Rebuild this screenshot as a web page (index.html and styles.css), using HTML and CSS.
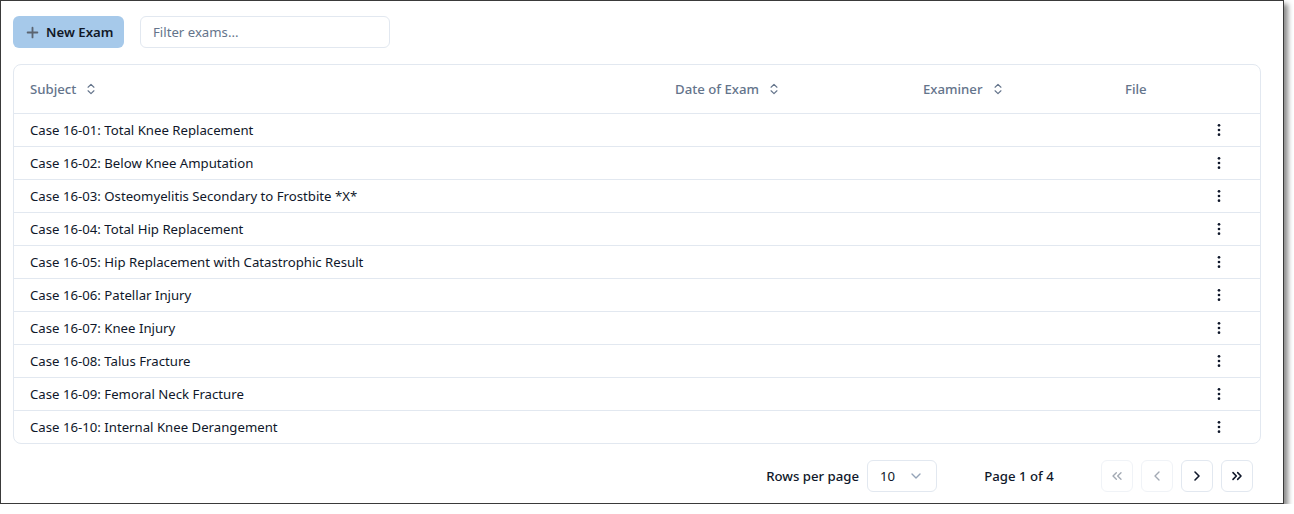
FILE: index.html
```html
<!DOCTYPE html>
<html>
<head>
<meta charset="utf-8">
<link rel="stylesheet" href="styles.css">
</head>
<body>
<div class="frame">
  <div class="toolbar">
    <button class="btn-new">
      <svg width="13" height="13" viewBox="0 0 24 24" fill="none" stroke="#5b6470" stroke-width="3.4" stroke-linecap="round"><path d="M12 3v18M3 12h18"/></svg>
      <span>New Exam</span>
    </button>
    <div class="filter">Filter exams...</div>
  </div>

  <div class="card">
    <div class="row head">
      <div class="cell">Subject <svg class="sort" width="14" height="14" viewBox="0 0 24 24" fill="none" stroke="currentColor" stroke-width="2" stroke-linecap="round" stroke-linejoin="round"><path d="m7 15 5 5 5-5"/><path d="m7 9 5-5 5 5"/></svg></div>
      <div class="cell">Date of Exam <svg class="sort" width="14" height="14" viewBox="0 0 24 24" fill="none" stroke="currentColor" stroke-width="2" stroke-linecap="round" stroke-linejoin="round"><path d="m7 15 5 5 5-5"/><path d="m7 9 5-5 5 5"/></svg></div>
      <div class="cell">Examiner <svg class="sort" width="14" height="14" viewBox="0 0 24 24" fill="none" stroke="currentColor" stroke-width="2" stroke-linecap="round" stroke-linejoin="round"><path d="m7 15 5 5 5-5"/><path d="m7 9 5-5 5 5"/></svg></div>
      <div class="cell">File</div>
      <div class="cell"></div>
    </div>
    <div class="row"><div class="cell">Case 16-01: Total Knee Replacement</div><div class="cell"></div><div class="cell"></div><div class="cell"></div><div class="cell act"><svg width="16" height="16" viewBox="0 0 24 24" fill="#0f172a"><circle cx="12" cy="5" r="2"/><circle cx="12" cy="12" r="2"/><circle cx="12" cy="19" r="2"/></svg></div></div>
    <div class="row"><div class="cell">Case 16-02: Below Knee Amputation</div><div class="cell"></div><div class="cell"></div><div class="cell"></div><div class="cell act"><svg width="16" height="16" viewBox="0 0 24 24" fill="#0f172a"><circle cx="12" cy="5" r="2"/><circle cx="12" cy="12" r="2"/><circle cx="12" cy="19" r="2"/></svg></div></div>
    <div class="row"><div class="cell">Case 16-03: Osteomyelitis Secondary to Frostbite *X*</div><div class="cell"></div><div class="cell"></div><div class="cell"></div><div class="cell act"><svg width="16" height="16" viewBox="0 0 24 24" fill="#0f172a"><circle cx="12" cy="5" r="2"/><circle cx="12" cy="12" r="2"/><circle cx="12" cy="19" r="2"/></svg></div></div>
    <div class="row"><div class="cell">Case 16-04: Total Hip Replacement</div><div class="cell"></div><div class="cell"></div><div class="cell"></div><div class="cell act"><svg width="16" height="16" viewBox="0 0 24 24" fill="#0f172a"><circle cx="12" cy="5" r="2"/><circle cx="12" cy="12" r="2"/><circle cx="12" cy="19" r="2"/></svg></div></div>
    <div class="row"><div class="cell">Case 16-05: Hip Replacement with Catastrophic Result</div><div class="cell"></div><div class="cell"></div><div class="cell"></div><div class="cell act"><svg width="16" height="16" viewBox="0 0 24 24" fill="#0f172a"><circle cx="12" cy="5" r="2"/><circle cx="12" cy="12" r="2"/><circle cx="12" cy="19" r="2"/></svg></div></div>
    <div class="row"><div class="cell">Case 16-06: Patellar Injury</div><div class="cell"></div><div class="cell"></div><div class="cell"></div><div class="cell act"><svg width="16" height="16" viewBox="0 0 24 24" fill="#0f172a"><circle cx="12" cy="5" r="2"/><circle cx="12" cy="12" r="2"/><circle cx="12" cy="19" r="2"/></svg></div></div>
    <div class="row"><div class="cell">Case 16-07: Knee Injury</div><div class="cell"></div><div class="cell"></div><div class="cell"></div><div class="cell act"><svg width="16" height="16" viewBox="0 0 24 24" fill="#0f172a"><circle cx="12" cy="5" r="2"/><circle cx="12" cy="12" r="2"/><circle cx="12" cy="19" r="2"/></svg></div></div>
    <div class="row"><div class="cell">Case 16-08: Talus Fracture</div><div class="cell"></div><div class="cell"></div><div class="cell"></div><div class="cell act"><svg width="16" height="16" viewBox="0 0 24 24" fill="#0f172a"><circle cx="12" cy="5" r="2"/><circle cx="12" cy="12" r="2"/><circle cx="12" cy="19" r="2"/></svg></div></div>
    <div class="row"><div class="cell">Case 16-09: Femoral Neck Fracture</div><div class="cell"></div><div class="cell"></div><div class="cell"></div><div class="cell act"><svg width="16" height="16" viewBox="0 0 24 24" fill="#0f172a"><circle cx="12" cy="5" r="2"/><circle cx="12" cy="12" r="2"/><circle cx="12" cy="19" r="2"/></svg></div></div>
    <div class="row"><div class="cell">Case 16-10: Internal Knee Derangement</div><div class="cell"></div><div class="cell"></div><div class="cell"></div><div class="cell act"><svg width="16" height="16" viewBox="0 0 24 24" fill="#0f172a"><circle cx="12" cy="5" r="2"/><circle cx="12" cy="12" r="2"/><circle cx="12" cy="19" r="2"/></svg></div></div>
  </div>

  <div class="pager">
    <span class="label">Rows per page</span>
    <div class="select"><span>10</span><svg width="16" height="16" viewBox="0 0 24 24" fill="none" stroke="#94a3b8" stroke-width="2" stroke-linecap="round" stroke-linejoin="round"><path d="m6 9 6 6 6-6"/></svg></div>
    <span class="pageinfo">Page 1 of 4</span>
    <div class="navs">
      <div class="nav disabled"><svg width="16" height="16" viewBox="0 0 24 24" fill="none" stroke="currentColor" stroke-width="2" stroke-linecap="round" stroke-linejoin="round"><path d="m11 17-5-5 5-5"/><path d="m18 17-5-5 5-5"/></svg></div>
      <div class="nav disabled"><svg width="16" height="16" viewBox="0 0 24 24" fill="none" stroke="currentColor" stroke-width="2" stroke-linecap="round" stroke-linejoin="round"><path d="m15 18-6-6 6-6"/></svg></div>
      <div class="nav"><svg width="16" height="16" viewBox="0 0 24 24" fill="none" stroke="currentColor" stroke-width="2.4" stroke-linecap="round" stroke-linejoin="round"><path d="m9 18 6-6-6-6"/></svg></div>
      <div class="nav"><svg width="16" height="16" viewBox="0 0 24 24" fill="none" stroke="currentColor" stroke-width="2.4" stroke-linecap="round" stroke-linejoin="round"><path d="m6 17 5-5-5-5"/><path d="m13 17 5-5-5-5"/></svg></div>
    </div>
  </div>
</div>
</body>
</html>
```

FILE: styles.css
```css
* { box-sizing: border-box; }
html, body { margin: 0; padding: 0; background: #ffffff; }
body {
  font-family: "Noto Sans", "Open Sans", sans-serif;
  font-size: 13.2px;
  color: #0f172a;
}
.frame {
  width: 1284px;
  height: 504px;
  border: 1px solid #3a3a3a;
  background: #fff;
  box-shadow: 4px 4px 5px rgba(0,0,0,0.45);
  padding: 15px 22px 0 12px;
}
.toolbar {
  display: flex;
  align-items: center;
  gap: 16px;
  height: 32px;
}
.btn-new {
  display: flex;
  align-items: center;
  gap: 7px;
  height: 32px;
  width: 111px;
  padding: 0 0 0 13px;
  background: #a6c9ea;
  border: none;
  border-radius: 6px;
  font-family: inherit;
  font-size: 13.2px;
  font-weight: 600;
  color: #111827;
  white-space: nowrap;
}
.filter {
  width: 250px;
  height: 32px;
  border: 1px solid #e2e8f0;
  border-radius: 6px;
  padding: 0 12px;
  display: flex;
  align-items: center;
  color: #64748b;
}
.card {
  margin-top: 16px;
  border: 1px solid #e2e8f0;
  border-radius: 8px;
}
.row {
  display: grid;
  grid-template-columns: 645px 248px 202px 1fr 80px;
  height: 33px;
  border-bottom: 1px solid #e2e8f0;
  align-items: center;
}
.row:last-child { border-bottom: none; height: 32px; }
.row.head {
  height: 49px;
  color: #64748b;
  font-weight: 500;
}
.cell {
  padding: 0 16px;
  display: flex;
  align-items: center;
  white-space: nowrap;
  line-height: 18px;
  padding-bottom: 1px;
}
.head .cell { gap: 8px; }
.sort { color: #64748b; }
.cell.act { justify-content: center; padding: 0 2px 1px 0; }
.pager {
  margin-top: 16px;
  display: flex;
  align-items: center;
  justify-content: flex-end;
  padding-right: 8px;
  height: 32px;
}
.label { font-weight: 500; margin-right: 8px; }
.select {
  width: 70px;
  height: 32px;
  border: 1px solid #e2e8f0;
  border-radius: 6px;
  display: flex;
  align-items: center;
  justify-content: space-between;
  padding: 0 12px;
}
.pageinfo {
  font-weight: 500;
  width: 164px;
  text-align: center;
}
.navs { display: flex; gap: 8px; }
.nav {
  width: 32px;
  height: 32px;
  border: 1px solid #e2e8f0;
  border-radius: 6px;
  display: flex;
  align-items: center;
  justify-content: center;
  color: #0f172a;
}
.nav.disabled { opacity: 0.5; color: #475569; }
```
